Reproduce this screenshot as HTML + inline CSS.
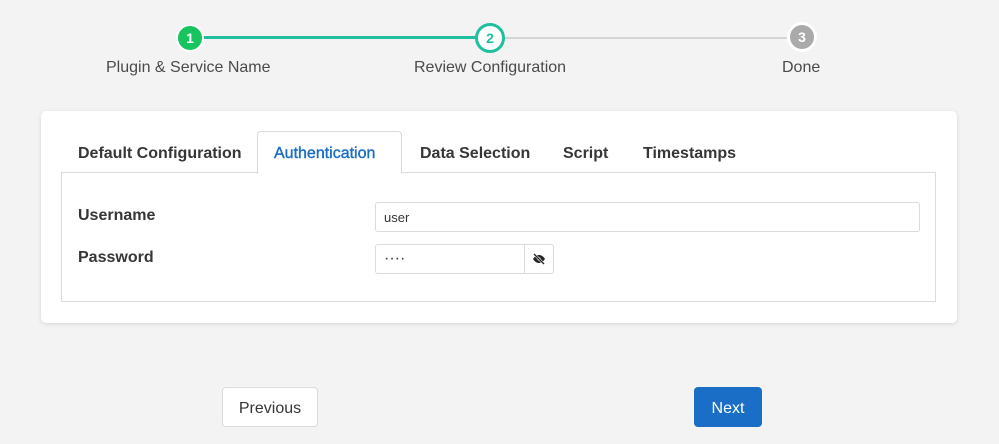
<!DOCTYPE html>
<html><head><style>
body{margin:0;width:999px;height:444px;background:#f3f3f3;font-family:"Liberation Sans",sans-serif;position:relative;overflow:hidden;color:#363636}
.abs{position:absolute}
.circ{position:absolute;width:24px;height:24px;border-radius:50%;box-sizing:border-box;font-size:14px;font-weight:bold;text-align:center;line-height:24px;color:#fff}
.lbl{position:absolute;font-size:16px;color:#4a4a4a;top:59px;white-space:nowrap}
.card{position:absolute;left:41px;top:111px;width:916px;height:212px;background:#fff;border-radius:5px;box-shadow:0 1px 4px rgba(0,0,0,.12)}
.tab{position:absolute;top:145px;font-size:16px;font-weight:bold;color:#363636}
.inp{position:absolute;border:1px solid #dbdbdb;border-radius:3px;background:#fff;box-sizing:border-box;font-size:13px}
.btn{position:absolute;top:387px;height:40px;border-radius:4px;box-sizing:border-box;font-size:16px;text-align:center;line-height:43px}
</style></head><body>
<div class="abs" style="left:200px;top:36px;width:290px;height:3px;background:#1fbf9f"></div>
<div class="abs" style="left:490px;top:37px;width:312px;height:2px;background:#d5d5d5"></div>
<div class="circ" style="left:176px;top:24px;background:#17c45e;border:2px solid #fff;width:28px;height:28px;line-height:24px">1</div>
<div class="circ" style="left:475px;top:23px;width:30px;height:30px;background:#fff;border:3px solid #1fbf9f;color:#1fbf9f;line-height:24px">2</div>
<div class="circ" style="left:787px;top:22px;width:30px;height:30px;background:#aaa;border:3px solid #fff;line-height:24px">3</div>
<div class="lbl" style="left:106px">Plugin &amp; Service Name</div>
<div class="lbl" style="left:414px">Review Configuration</div>
<div class="lbl" style="left:782px">Done</div>
<div class="card"></div>
<div class="abs" style="left:61px;top:172px;width:875px;height:130px;border:1px solid #dbdbdb;box-sizing:border-box"></div>
<div class="abs" style="left:257px;top:131px;width:145px;height:43px;background:#fff;border:1px solid #dbdbdb;border-bottom:none;border-radius:4px 4px 0 0;box-sizing:border-box"></div>
<div class="tab" style="left:78px">Default Configuration</div>
<div class="tab" style="left:274px;color:#1a6ec5;font-weight:normal;-webkit-text-stroke:.4px #1a6ec5">Authentication</div>
<div class="tab" style="left:420px">Data Selection</div>
<div class="tab" style="left:563px">Script</div>
<div class="tab" style="left:643px">Timestamps</div>
<div class="abs" style="left:78px;top:207px;font-size:16px;font-weight:bold">Username</div>
<div class="abs" style="left:78px;top:249px;font-size:16px;font-weight:bold">Password</div>
<div class="inp" style="left:375px;top:202px;width:545px;height:30px;padding:7px 8px">user</div>
<div class="inp" style="left:375px;top:244px;width:150px;height:30px;padding:5px 8px;border-radius:3px 0 0 3px;letter-spacing:0px;font-size:16px">····</div>
<div class="inp" style="left:524px;top:244px;width:30px;height:30px;border-radius:0 3px 3px 0">
<svg width="28" height="28" viewBox="0 0 28 28"><path d="M8 14c2-3 4-4 6-4s4 1 6 4c-2 3-4 4-6 4s-4-1-6-4z" fill="#222"/><circle cx="14" cy="14" r="1.6" fill="#fff"/><line x1="9" y1="9" x2="19" y2="19" stroke="#fff" stroke-width="2.5"/><line x1="9" y1="9" x2="19" y2="19" stroke="#222" stroke-width="1.3"/></svg></div>
<div class="btn" style="left:222px;width:96px;background:#fff;border:1px solid #dbdbdb;color:#363636;line-height:41px">Previous</div>
<div class="btn" style="left:694px;width:68px;background:#1a6ec5;color:#fff">Next</div>
</body></html>
